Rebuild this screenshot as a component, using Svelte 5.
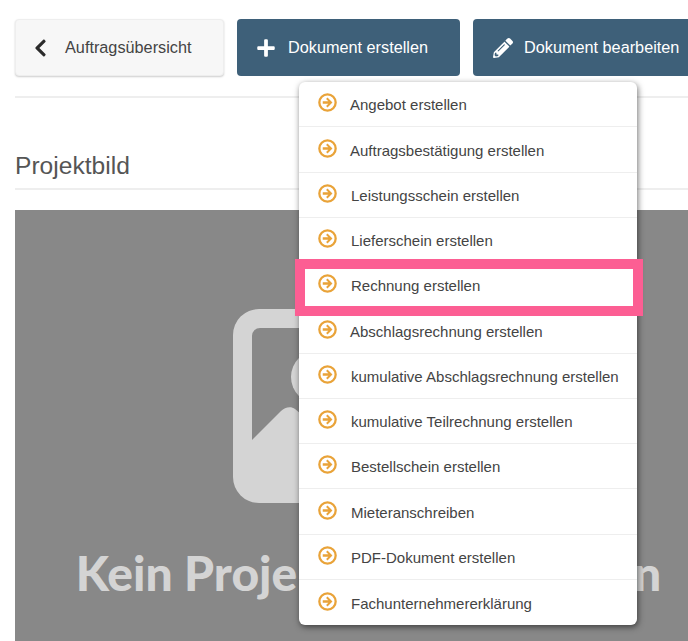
<script>
  const items = [
    { label: 'Angebot erstellen', tight: true },
    { label: 'Auftragsbestätigung erstellen', tight: true },
    { label: 'Leistungsschein erstellen' },
    { label: 'Lieferschein erstellen' },
    { label: 'Rechnung erstellen', marked: true },
    { label: 'Abschlagsrechnung erstellen', tight: true },
    { label: 'kumulative Abschlagsrechnung erstellen' },
    { label: 'kumulative Teilrechnung erstellen' },
    { label: 'Bestellschein erstellen' },
    { label: 'Mieteranschreiben' },
    { label: 'PDF-Dokument erstellen' },
    { label: 'Fachunternehmererklärung' }
  ];
</script>

<div class="page">
  <div class="toolbar">
    <button class="btn btn-light">
      <svg class="icon-back" viewBox="0 0 320 512"><path d="M34.52 239.03L228.87 44.69c9.37-9.37 24.57-9.37 33.94 0l22.67 22.67c9.36 9.36 9.37 24.52.04 33.9L131.49 256l154.02 154.75c9.34 9.38 9.32 24.54-.04 33.9l-22.67 22.67c-9.37 9.37-24.57 9.37-33.94 0L34.52 272.97c-9.37-9.37-9.37-24.57 0-33.94z"/></svg>
      Auftragsübersicht
    </button>
    <div class="menu-wrap">
      <button class="btn btn-primary btn-create">
        <svg class="icon-plus" viewBox="0 0 448 512"><path d="M416 208H272V64c0-17.67-14.33-32-32-32h-32c-17.67 0-32 14.33-32 32v144H32c-17.67 0-32 14.33-32 32v32c0 17.67 14.33 32 32 32h144v144c0 17.67 14.33 32 32 32h32c17.67 0 32-14.33 32-32V304h144c17.67 0 32-14.33 32-32v-32c0-17.67-14.33-32-32-32z"/></svg>
        Dokument erstellen
      </button>
      <ul class="menu">
        {#each items as item}
          <li class="menu-item" class:tight={item.tight}>
            <svg class="icon-go" viewBox="0 0 20 20">
              <circle cx="10" cy="10" r="8.6" fill="none" stroke="currentColor" stroke-width="2.4"/>
              <path d="M10 4.8 L15.2 10 L10 15.2 L8.5 13.7 L10.9 11.3 H5 V8.7 H10.9 L8.5 6.3 Z" fill="currentColor"/>
            </svg>
            <span>{item.label}</span>
            {#if item.marked}<div class="marker"></div>{/if}
          </li>
        {/each}
      </ul>
    </div>
    <button class="btn btn-primary btn-edit">
      <svg class="icon-pencil" viewBox="0 0 512 512"><path d="M497.9 142.1l-46.1 46.1c-4.7 4.7-12.3 4.7-17 0l-111-111c-4.7-4.7-4.7-12.3 0-17l46.1-46.1c18.7-18.7 49.1-18.7 67.9 0l60.1 60.1c18.8 18.7 18.8 49.1 0 67.9zM284.2 99.8L21.6 362.4.4 483.9c-2.9 16.4 11.4 30.6 27.8 27.8l121.5-21.3 262.6-262.6c4.7-4.7 4.7-12.3 0-17l-111-111c-4.8-4.7-12.4-4.7-17.1 0zM124.1 339.9c-5.5-5.5-5.5-14.3 0-19.8l154-154c5.5-5.5 14.3-5.5 19.8 0s5.5 14.3 0 19.8l-154 154c-5.5 5.5-14.3 5.5-19.8 0zM88 424h48v36.3l-64.5 11.3-31.1-31.1L51.7 376H88v48z"/></svg>
      Dokument bearbeiten
    </button>
  </div>

  <hr class="rule" />

  <h2 class="title">Projektbild</h2>

  <div class="placeholder">
    <svg class="icon-image" viewBox="0 0 272 194">
      <path fill-rule="evenodd" d="M26 0H246A26 26 0 0 1 272 26V168A26 26 0 0 1 246 194H26A26 26 0 0 1 0 168V26A26 26 0 0 1 26 0ZM27 19A8 8 0 0 0 19 27V131L48 102C52 98 58 97 62 100L120 148L146 122C149 119 154 119 157 122L253 150V27A8 8 0 0 0 245 19Z"/>
      <circle cx="85" cy="68" r="27"/>
    </svg>
    <div class="placeholder-text">Kein Projektbild vorhanden</div>
  </div>
</div>

<style>
  :global(body) {
    margin: 0;
    background: #fff;
  }

  .page {
    height: 641px;
    overflow: hidden;
    box-sizing: border-box;
    padding: 19px 0 0 15px;
    font-family: "Liberation Sans", Arial, sans-serif;
    color: #444;
  }

  .toolbar {
    display: flex;
    gap: 13px;
    width: 700px;
  }

  .btn {
    display: flex;
    align-items: center;
    height: 57px;
    box-sizing: border-box;
    border-radius: 4px;
    font-family: inherit;
    font-size: 16.25px;
    white-space: nowrap;
    flex-shrink: 0;
  }

  .btn-light {
    width: 209px;
    padding: 0 0 0 18px;
    background: #f7f7f7;
    border: 1px solid #eee;
    box-shadow: 0 1px 2px rgba(0, 0, 0, 0.2);
    color: #444;
  }

  .btn-primary {
    background: #3e6079;
    border: 0;
    color: #fff;
  }

  .btn-create {
    width: 223px;
    padding: 0 0 0 20px;
  }

  .btn-edit {
    width: 222px;
    padding: 0 0 0 20px;
  }

  .icon-back {
    width: 13px;
    height: 20px;
    margin-right: 18px;
    fill: #2b2b2b;
  }

  .icon-plus {
    width: 18px;
    height: 20px;
    margin-right: 13px;
    fill: #fff;
  }

  .icon-pencil {
    width: 20px;
    height: 20px;
    margin-right: 11px;
    fill: #fff;
  }

  .menu-wrap {
    position: relative;
  }

  .menu {
    position: absolute;
    z-index: 2;
    top: 63px;
    left: 62px;
    width: 338px;
    margin: 0;
    padding: 0;
    list-style: none;
    background: #fff;
    border-radius: 6px;
    box-shadow: 1px 2px 6px rgba(0, 0, 0, 0.55);
  }

  .menu-item {
    position: relative;
    display: flex;
    align-items: center;
    height: 45.25px;
    box-sizing: border-box;
    padding: 0 0 0 19px;
    font-size: 15px;
    color: #444;
    border-bottom: 1px solid #eee;
  }

  .menu-item:last-child {
    border-bottom: 0;
  }

  .menu-item span {
    margin: 1.5px 0 0 14px;
  }

  .menu-item.tight span {
    margin-left: 13px;
  }

  .icon-go {
    width: 19px;
    height: 19px;
    margin-top: -2.5px;
    color: #e9a339;
    flex-shrink: 0;
  }

  .marker {
    position: absolute;
    top: -4px;
    left: -4px;
    right: -6px;
    height: 57px;
    box-sizing: border-box;
    border: 10px solid #fc5e93;
    pointer-events: none;
  }

  .rule {
    height: 2px;
    margin: 20px 0 0 0;
    border: 0;
    background: #eee;
  }

  .title {
    margin: 54px 0 0 0;
    padding-bottom: 8px;
    border-bottom: 2px solid #eee;
    font-size: 24.6px;
    font-weight: 400;
    line-height: 28px;
    color: #555;
  }

  .placeholder {
    display: flex;
    flex-direction: column;
    align-items: center;
    margin-top: 20px;
    width: 707px;
    height: 500px;
    padding-top: 99px;
    background: #888;
    color: #d4d4d4;
  }

  .icon-image {
    width: 272px;
    height: 194px;
    fill: #d4d4d4;
  }

  .placeholder-text {
    margin-top: 40px;
    font-family: Lato, sans-serif;
    font-size: 48px;
    font-weight: 900;
    line-height: 60px;
    white-space: nowrap;
  }
</style>
